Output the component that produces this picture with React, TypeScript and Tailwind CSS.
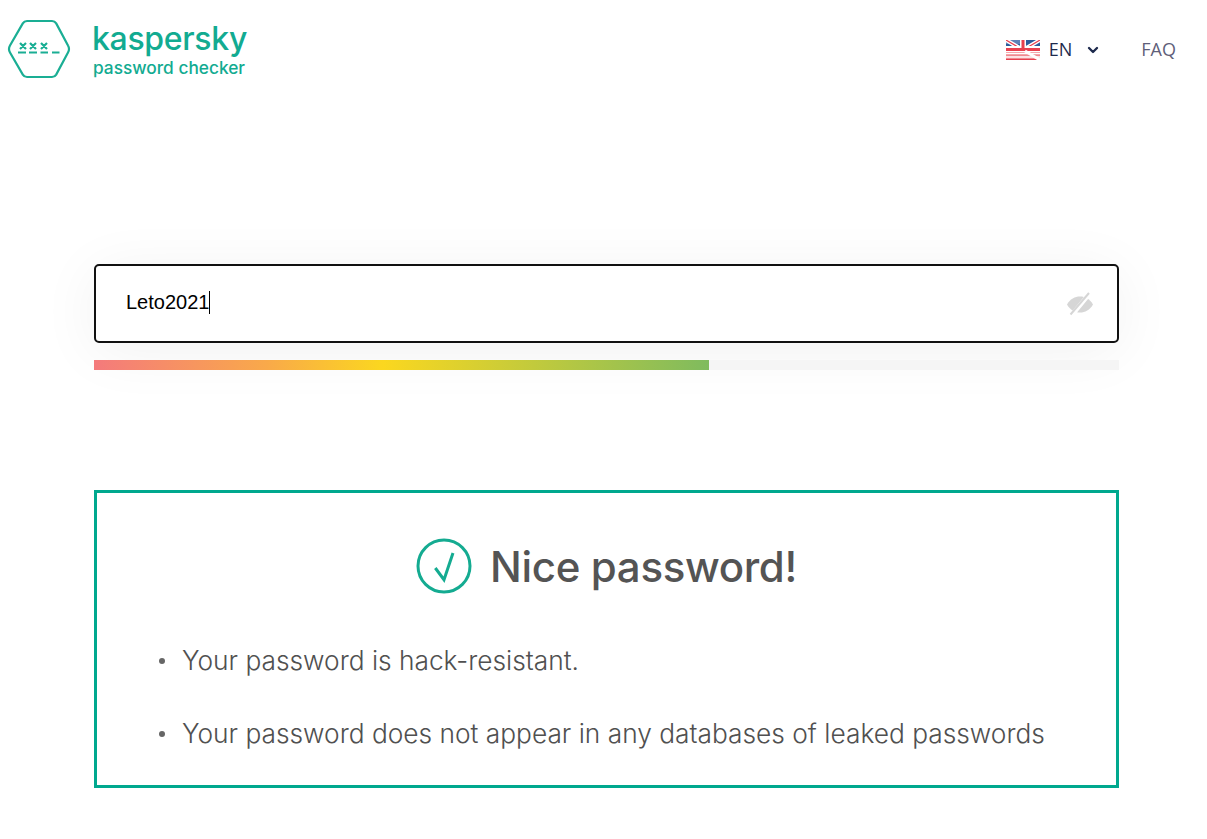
import { ChevronDown } from 'lucide-react'

const bullets = [
  'Your password is hack-resistant.',
  'Your password does not appear in any databases of leaked passwords',
]

function LogoMark() {
  return (
    <svg width="64" height="60" viewBox="0 0 64 60" fill="none" className="shrink-0">
      <path
        d="M20 2h25a5 5 0 0 1 4.200 2.400L61 26.500a7 7 0 0 1 0 7L49.200 55.600a5 5 0 0 1-4.200 2.400H20a5 5 0 0 1-4.200-2.400L3 33.500a7 7 0 0 1 0-7L15.800 4.400A5 5 0 0 1 20 2z"
        stroke="#1aae94"
        strokeWidth="2.200"
      />
      <path
        d="M13 24l6 6M19 24l-6 6M23 24l6 6M29 24l-6 6M34 24l6 6M40 24l-6 6"
        stroke="#1aae94"
        strokeWidth="2.200"
      />
      <path d="M11 33.500h8M22 33.500h8M33.500 33.500h7.500M45 33.500h7.500" stroke="#1aae94" strokeWidth="2" />
    </svg>
  )
}

function FlagIcon() {
  return (
    <svg width="34" height="20" viewBox="0 0 34 20" className="shrink-0">
      <rect width="34" height="12" fill="#2c5c9c" />
      <rect width="15" height="4" fill="#5d82b8" />
      <path d="M0 0l17 10M34 0L17 10" stroke="#fff" strokeWidth="4" />
      <path d="M0 0l17 10M34 0L17 10" stroke="#e8404f" strokeWidth="1.200" />
      <path d="M17 0v11M0 9h34" stroke="#fff" strokeWidth="6" />
      <path d="M17 0v11M0 9.500h34" stroke="#e8404f" strokeWidth="3" />
      <rect y="12" width="34" height="8" fill="#f08a90" />
      <path d="M0 13.500h34M0 17h34" stroke="#fff" strokeWidth="1.600" />
      <path d="M0 19.500h34" stroke="#e8404f" strokeWidth="1" />
      <path d="M19 11l15 9" stroke="#fff" strokeWidth="3" />
    </svg>
  )
}

function EyeOffIcon() {
  return (
    <svg width="28" height="24" viewBox="0 0 28 24" className="shrink-0">
      <path
        d="M1 12.500C4 7 9 4.500 14 4.500s10 2.500 13 8c-3 5.500-8 8-13 8s-10-2.500-13-8z"
        fill="#d6d6d6"
      />
      <path d="M6 23L24 1" stroke="#fff" strokeWidth="4.500" />
      <path d="M4.500 22.500L23 1" stroke="#d6d6d6" strokeWidth="2" />
    </svg>
  )
}

export default function App() {
  return (
    <div className="min-h-[839px] bg-white font-['Inter',sans-serif]">
      <header className="flex items-start justify-between pl-[7px] pr-[31px] pt-[19px]">
        <div className="flex items-start gap-[21px]">
          <LogoMark />
          <div className="flex flex-col pt-0.5 text-[#12ab91]">
            <span className="text-[32px] font-medium leading-[36px] tracking-[-0.01em]">kaspersky</span>
            <span className="ml-px mt-px text-[17.3px] font-medium leading-[20px]">password checker</span>
          </div>
        </div>
        <nav className="flex items-center gap-[40px] pt-[17px] font-['Open_Sans',sans-serif] text-[18px]">
          <div className="flex items-center">
            <FlagIcon />
            <span className="ml-[9px] text-[#1d2a4d]">EN</span>
            <ChevronDown size={16} strokeWidth={3.5} className="ml-[13px] text-[#1d2a4d]" />
          </div>
          <a className="text-[#5f5f7a]">FAQ</a>
        </nav>
      </header>

      <main className="ml-[94px] mt-[185px] w-[1025px]">
        <div className="flex h-[79px] items-center justify-between rounded-[5px] border-2 border-[#111] bg-white pl-[30px] pr-[23px] shadow-[0_8px_60px_rgba(0,0,0,0.06)]">
          <div className="flex items-center pb-[3px] font-['Liberation_Sans',sans-serif] text-[20px] text-black">
            Leto2021
            <span className="h-[23px] w-px bg-black" />
          </div>
          <EyeOffIcon />
        </div>

        <div className="mt-[17px] h-2.5 bg-[#f5f5f5]">
          <div className="h-full w-[60%] bg-[linear-gradient(90deg,#f47a7c_0%,#f9a94a_28%,#fbd71f_47%,#7fbb5e_100%)]" />
        </div>

        <section className="mt-[120px] h-[298px] border-[3px] border-[#00a88e] px-[62px] pt-[45px]">
          <div className="flex items-center justify-center gap-[18px]">
            <svg width="56" height="56" viewBox="0 0 56 56" fill="none" className="shrink-0">
              <circle cx="28" cy="28" r="26" stroke="#14ab91" strokeWidth="3" />
              <path d="M19.300 30L28 41.700L37 15" stroke="#14ab91" strokeWidth="3" />
            </svg>
            <h1 className="translate-y-px text-[42px] font-medium leading-[56px] tracking-[-0.008em] text-[#545454]">Nice password!</h1>
          </div>
          <ul className="mt-[49px] flex flex-col gap-[37px]">
            {bullets.map((b) => (
              <li key={b} className="flex items-center text-[26.3px] font-light leading-9 text-[#505050]">
                <span className="mr-[17px] h-1.5 w-1.5 rounded-full bg-[#666]" />
                {b}
              </li>
            ))}
          </ul>
        </section>
      </main>
    </div>
  )
}
